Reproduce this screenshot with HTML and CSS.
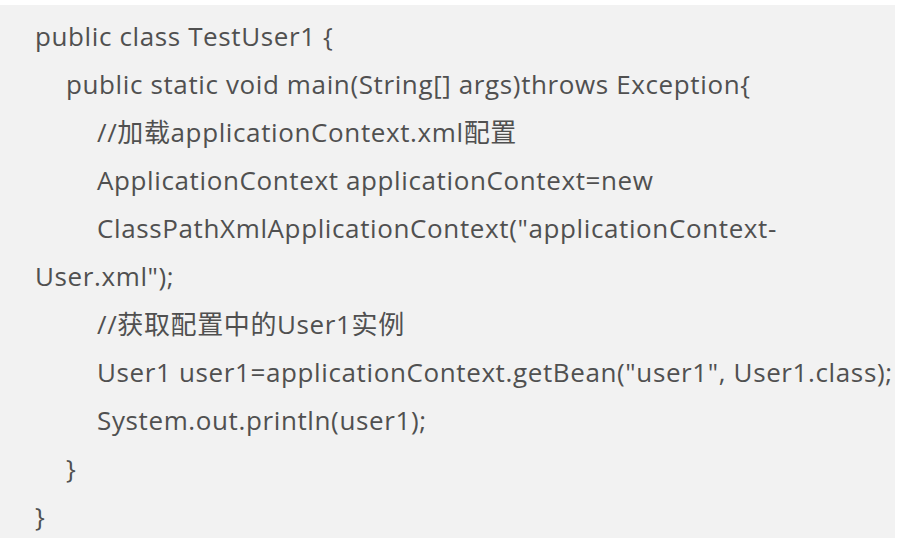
FILE: index.html
```html
<!DOCTYPE html>
<html lang="zh-CN">
<head>
<meta charset="utf-8">
<title>TestUser1</title>
<link rel="stylesheet" href="styles.css">
</head>
<body>
<div class="code-box">
  <div class="line">public class TestUser1 {</div>
  <div class="line in1">public static void main(String[] args)throws Exception{</div>
  <div class="line in2">//加载applicationContext.xml配置</div>
  <div class="line in2">ApplicationContext applicationContext=new</div>
  <div class="line in2">ClassPathXmlApplicationContext("applicationContext-</div>
  <div class="line">User.xml");</div>
  <div class="line in2">//获取配置中的User1实例</div>
  <div class="line in2">User1 user1=applicationContext.getBean("user1", User1.class);</div>
  <div class="line in2">System.out.println(user1);</div>
  <div class="line in1">}</div>
  <div class="line">}</div>
</div>
</body>
</html>
```

FILE: styles.css
```css
html, body {
  margin: 0;
  padding: 0;
  background: #ffffff;
}

.code-box {
  box-sizing: border-box;
  margin-top: 5px;
  width: 895px;
  height: 533px;
  background: #f2f2f2;
  padding: 7px 0 0 35px;
  font-family: "Open Sans", "Noto Sans CJK SC", sans-serif;
  font-size: 26px;
  letter-spacing: 0.62px;
  line-height: 48px;
  color: #505050;
}

.line {
  white-space: nowrap;
}

.in1 {
  padding-left: 31px;
}

.in2 {
  padding-left: 62px;
}
```
